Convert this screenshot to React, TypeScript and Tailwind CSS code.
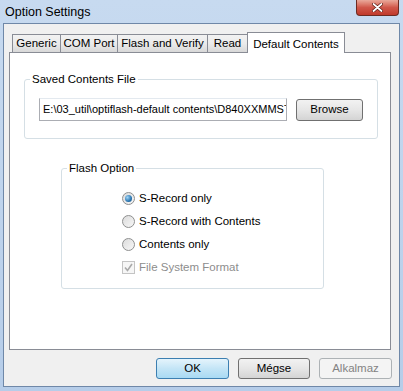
// App.tsx - Option Settings dialog (Windows 7 style)

const font = { fontFamily: '"Liberation Sans", Arial, sans-serif' };

function Tab({ label, w, active = false }: { label: string; w: string; active?: boolean }) {
  if (active) {
    return (
      <div
        className={`relative z-10 -mb-px -ml-px flex h-[21px] items-start justify-center border border-b-0 border-[#898c95] bg-white pt-[3px] text-[11.5px] text-black ${w}`}
      >
        {label}
      </div>
    );
  }
  return (
    <div
      className={`flex h-[18px] items-center justify-center border border-b-0 border-r-0 border-[#898c95] bg-gradient-to-b from-[#f2f2f2] via-[#ebebeb] to-[#d8d8d8] pt-[1px] text-[11.5px] text-black ${w}`}
    >
      {label}
    </div>
  );
}

function Radio({ label, checked = false }: { label: string; checked?: boolean }) {
  return (
    <div className="flex h-[23px] items-center gap-[4px]">
      <div className="flex h-[13px] w-[13px] items-center justify-center rounded-full border border-[#8e8f8f] bg-gradient-to-br from-[#dcdcdc] to-[#f7f7f7]">
        {checked && (
          <div className="h-[7px] w-[7px] rounded-full bg-[radial-gradient(circle_at_35%_35%,#9fd5f7,#2a75b0_60%,#174f7e)]" />
        )}
      </div>
      <span className="text-[11.5px] text-black">{label}</span>
    </div>
  );
}

function GroupBox({
  title,
  className,
  children,
}: {
  title: string;
  className: string;
  children: React.ReactNode;
}) {
  return (
    <div className={`relative rounded-[3px] border border-[#d5dfe5] ${className}`}>
      <span className="absolute -top-[9px] left-[5px] bg-white px-[2px] text-[11.5px] leading-[16px] text-black">
        {title}
      </span>
      {children}
    </div>
  );
}

export default function App() {
  return (
    <div
      className="flex h-[391px] w-[403px] flex-col bg-gradient-to-b from-[#c7daf0] to-[#b6cde9]"
      style={font}
    >
      {/* title bar */}
      <div className="flex h-[23px] shrink-0 items-start justify-between">
        <span className="pl-[5px] pt-[3px] text-[12.5px] text-black">Option Settings</span>
        <div className="mr-[4px] flex h-[16px] w-[43px] items-center justify-center rounded-b-[4px] border border-t-0 border-[#6d2b22] bg-gradient-to-b from-[#e9a99b] via-[#d0574a] to-[#c0392b]">
          <svg width="11" height="9" viewBox="0 0 11 9">
            <path d="M1.5 1 L9.5 8 M9.5 1 L1.5 8" stroke="#5a1a12" strokeWidth="3.2" strokeLinecap="round" />
            <path d="M1.5 1 L9.5 8 M9.5 1 L1.5 8" stroke="#ffffff" strokeWidth="1.8" strokeLinecap="round" />
          </svg>
        </div>
      </div>

      {/* client area */}
      <div className="ml-[3px] mr-[3px] flex h-[364px] flex-col border border-[#6f88a8] bg-[#f0f0f0]">
        <div className="flex flex-col px-[5px] pt-[8px]">
          {/* tabs */}
          <div className="flex items-end pl-[3px]">
            <Tab label="Generic" w="w-[48px]" />
            <Tab label="COM Port" w="w-[57px]" />
            <Tab label="Flash and Verify" w="w-[90px]" />
            <div className="flex items-end border-r border-[#898c95]">
              <Tab label="Read" w="w-[40px]" />
            </div>
            <Tab label="Default Contents" w="w-[98px]" active />
          </div>

          {/* tab panel */}
          <div className="h-[298px] w-[382px] border border-[#898c95] bg-white">
            <GroupBox title="Saved Contents File" className="ml-[14px] mt-[26px] h-[60px] w-[354px]">
              <div className="flex items-center pl-[14px] pt-[18px]">
                <div className="h-[23px] w-[248px] overflow-hidden whitespace-nowrap border border-[#abadb3] border-t-[#e3e9ef] bg-white pl-[3px] pt-[3px] text-[11px] leading-[15px] text-black">
                  <span className="block w-[243px] overflow-hidden">E:\03_util\optiflash-default contents\D840XXMMST</span>
                </div>
                <button className="ml-[9px] h-[22px] w-[67px] rounded-[3px] border border-[#707070] bg-gradient-to-b from-[#f2f2f2] via-[#e6e6e6] to-[#d4d4d4] text-[11.5px] text-black">
                  Browse
                </button>
              </div>
            </GroupBox>

            <GroupBox title="Flash Option" className="ml-[51px] mt-[29px] h-[121px] w-[263px]">
              <div className="flex flex-col pl-[60px] pt-[18px]">
                <Radio label="S-Record only" checked />
                <Radio label="S-Record with Contents" />
                <Radio label="Contents only" />
                <div className="flex h-[23px] items-center gap-[4px]">
                  <div className="flex h-[13px] w-[13px] items-center justify-center border border-[#c4c4c4] bg-[#f6f6f6]">
                    <svg width="9" height="9" viewBox="0 0 9 9">
                      <path d="M1 4.5 L3.5 7.5 L8 1" fill="none" stroke="#a9a9a9" strokeWidth="1.6" />
                    </svg>
                  </div>
                  <span className="text-[11.5px] text-[#8d8d8d]">File System Format</span>
                </div>
              </div>
            </GroupBox>
          </div>
        </div>

        {/* bottom buttons */}
        <div className="flex justify-end gap-[9px] pr-[7px] pt-[8px]">
          <button className="h-[21px] w-[73px] rounded-[3px] border border-[#3c7fb1] bg-gradient-to-b from-[#e5f4fc] via-[#c4e5f6] to-[#a9daf3] text-[11.5px] text-black">
            OK
          </button>
          <button className="h-[21px] w-[72px] rounded-[3px] border border-[#707070] bg-gradient-to-b from-[#f2f2f2] via-[#e6e6e6] to-[#d4d4d4] text-[11.5px] text-black">
            Mégse
          </button>
          <button className="h-[21px] w-[73px] rounded-[3px] border border-[#adb2b5] bg-[#f4f4f4] text-[11.5px] text-[#838383]">
            Alkalmaz
          </button>
        </div>
      </div>
    </div>
  );
}
